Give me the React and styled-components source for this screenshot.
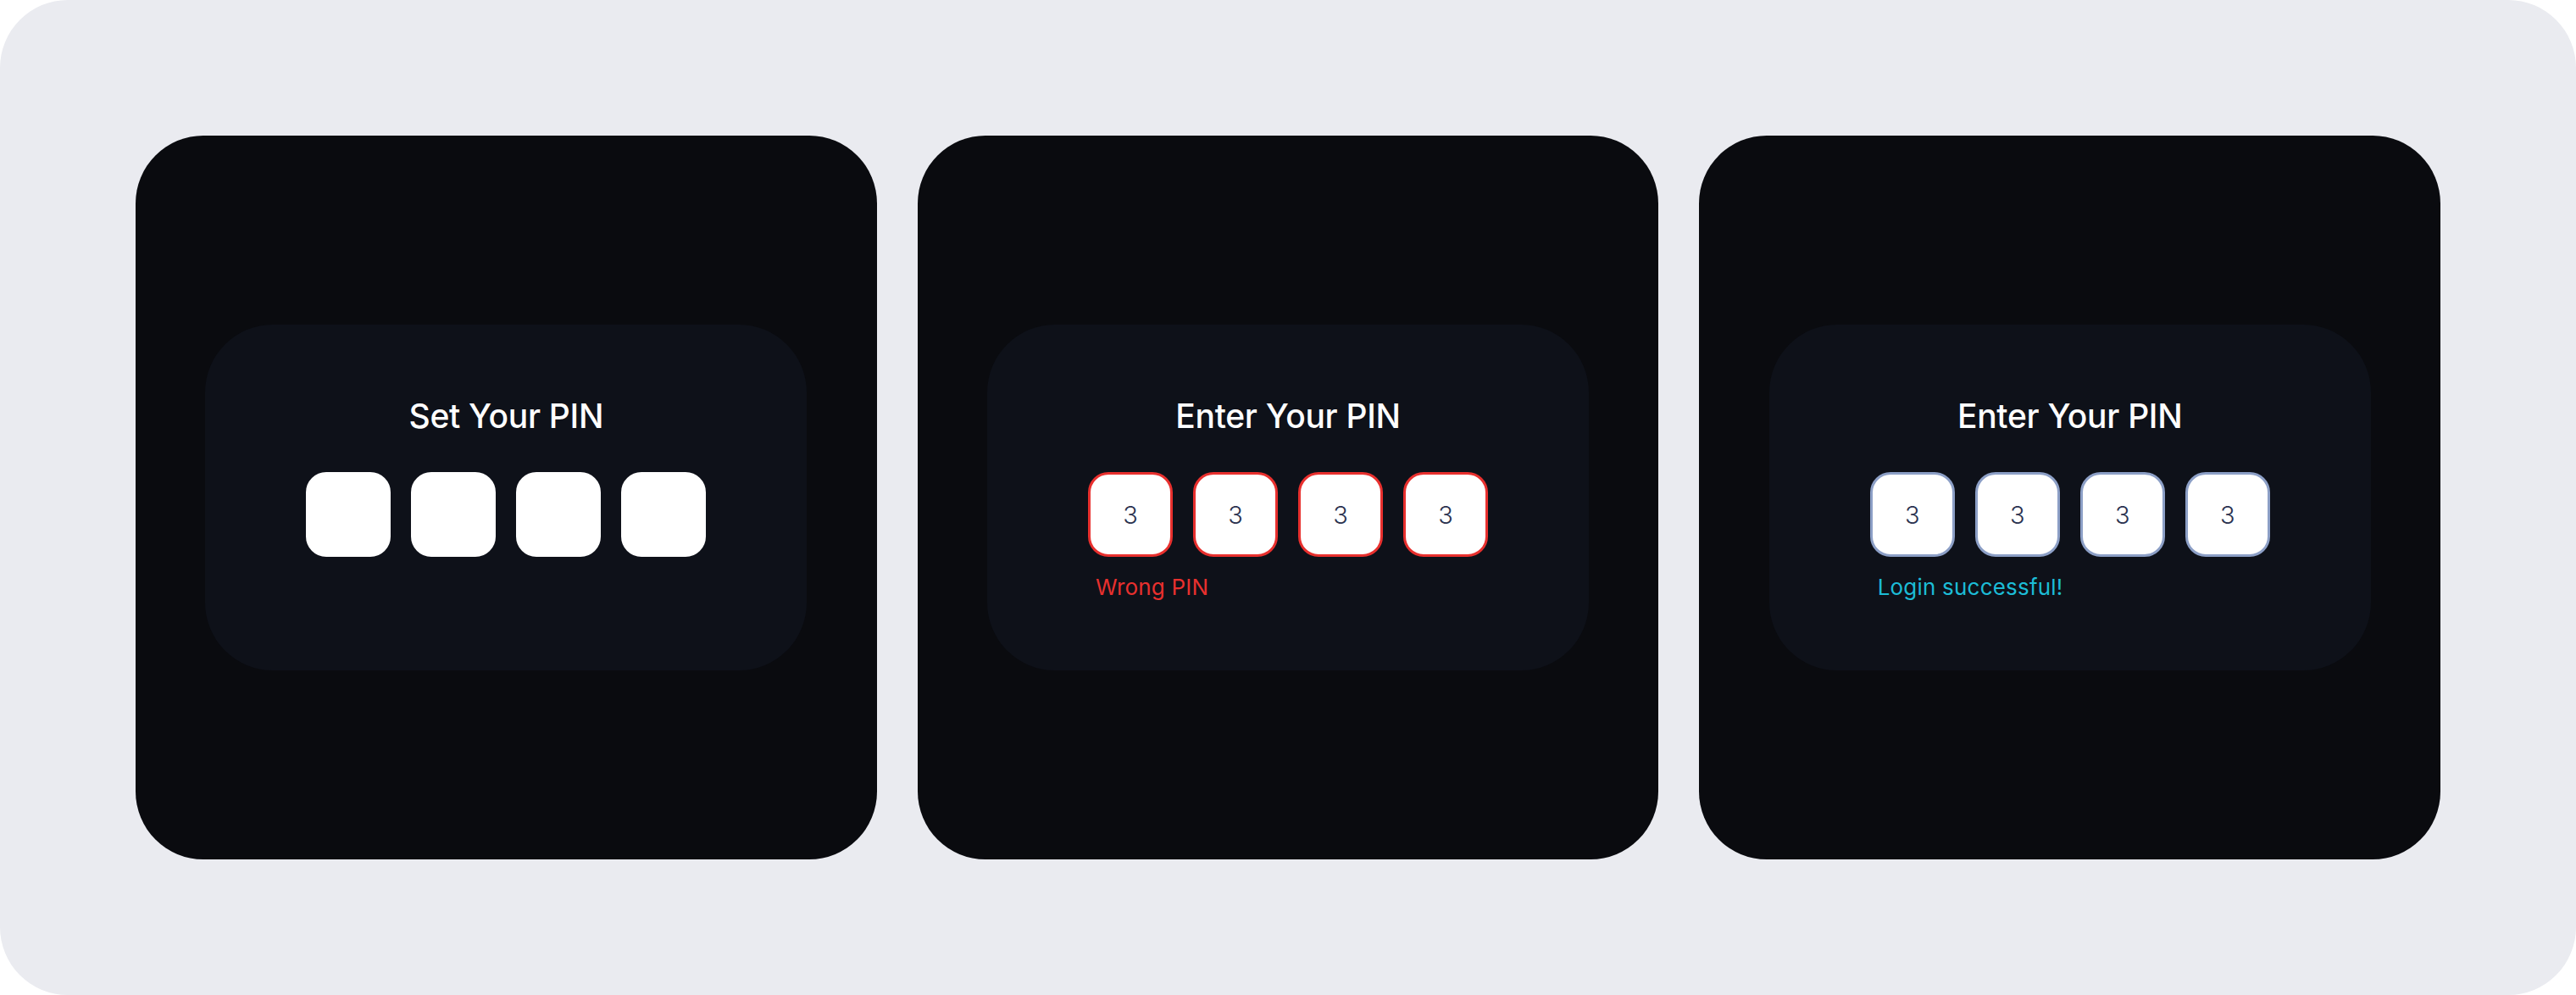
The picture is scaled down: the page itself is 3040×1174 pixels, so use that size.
import React from "react";
import styled, { createGlobalStyle } from "styled-components";

const GlobalStyle = createGlobalStyle`
  html, body {
    margin: 0;
    padding: 0;
    background: #ffffff;
  }
  body {
    font-family: "Inter", "Noto Sans", sans-serif;
  }
`;

const Stage = styled.div`
  box-sizing: border-box;
  width: 100%;
  height: 1174px;
  padding: 160px;
  background: #eaebf0;
  border-radius: 80px;
  display: flex;
  gap: 48px;
`;

const Card = styled.section`
  flex: 1;
  background: #0a0b0f;
  border-radius: 80px;
  display: flex;
  align-items: center;
  justify-content: center;
`;

const Panel = styled.div`
  box-sizing: border-box;
  width: 710px;
  height: 408px;
  padding-top: 84px;
  background: #0e1119;
  border-radius: 80px;
  display: flex;
  flex-direction: column;
  align-items: center;
`;

const Title = styled.h2`
  margin: 0;
  color: #ffffff;
  font-family: "Inter", sans-serif;
  font-size: 39px;
  line-height: 47px;
  font-weight: 500;
  letter-spacing: -0.3px;
`;

const PinGroup = styled.div`
  margin-top: 43px;
  width: 472px;
  display: flex;
  flex-direction: column;
`;

const PinRow = styled.div`
  display: flex;
  gap: 24px;
`;

const borders = {
  idle: "#ffffff",
  error: "#e8302e",
  success: "#8c9fc6",
};

const PinBox = styled.div`
  box-sizing: border-box;
  width: 100px;
  height: 100px;
  border-radius: 24px;
  background: #ffffff;
  border: 3px solid ${(p) => borders[p.$state]};
  display: flex;
  align-items: center;
  justify-content: center;
  color: #2b3350;
  font-family: "Inter", sans-serif;
  font-size: 29px;
  font-weight: 300;
`;

const Message = styled.p`
  margin: 20px 0 0 9px;
  font-family: "Inter", sans-serif;
  font-size: 26px;
  line-height: 32px;
  font-weight: 400;
  letter-spacing: 0.2px;
  color: ${(p) => (p.$state === "error" ? "#e8302e" : "#1cbcd6")};
`;

const screens = [
  { title: "Set Your PIN", state: "idle", digits: ["", "", "", ""] },
  {
    title: "Enter Your PIN",
    state: "error",
    digits: ["3", "3", "3", "3"],
    message: "Wrong PIN",
  },
  {
    title: "Enter Your PIN",
    state: "success",
    digits: ["3", "3", "3", "3"],
    message: "Login successful!",
  },
];

export default function App() {
  return (
    <>
      <GlobalStyle />
      <Stage>
        {screens.map((s, i) => (
          <Card key={i}>
            <Panel>
              <Title>{s.title}</Title>
              <PinGroup>
                <PinRow>
                  {s.digits.map((d, j) => (
                    <PinBox key={j} $state={s.state}>
                      {d}
                    </PinBox>
                  ))}
                </PinRow>
                {s.message && <Message $state={s.state}>{s.message}</Message>}
              </PinGroup>
            </Panel>
          </Card>
        ))}
      </Stage>
    </>
  );
}
